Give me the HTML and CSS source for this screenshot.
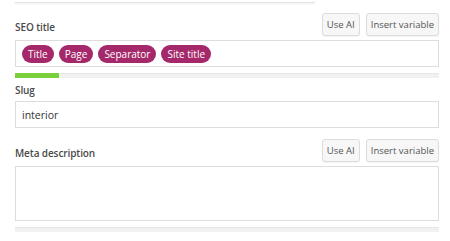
FILE: index.html
```html
<!DOCTYPE html>
<html lang="en">
  <head>
    <meta charset="UTF-8" />
    <meta name="viewport" content="width=device-width, initial-scale=1.0" />
    <title>Search appearance</title>
    <link rel="stylesheet" href="styles.css">
  </head>
  <body>
    <div class="editor">
      <div class="editor__prev"></div>

      <div class="field">
        <div class="field__head">
          <label class="field__label">SEO title</label>
          <div class="field__actions">
            <button class="action">Use AI</button>
            <button class="action">Insert variable</button>
          </div>
        </div>
        <div class="field__input field__input--tags">
          <span class="tag">Title</span>
          <span class="tag">Page</span>
          <span class="tag">Separator</span>
          <span class="tag">Site title</span>
        </div>
        <div class="meter"><span class="meter__fill" style="width: 44px"></span></div>
      </div>

      <div class="field field--slug">
        <label class="field__label">Slug</label>
        <div class="field__input">interior</div>
      </div>

      <div class="field field--meta">
        <div class="field__head">
          <label class="field__label">Meta description</label>
          <div class="field__actions">
            <button class="action">Use AI</button>
            <button class="action">Insert variable</button>
          </div>
        </div>
        <div class="field__input field__input--area"></div>
        <div class="meter"></div>
      </div>
    </div>
  </body>
</html>
```
FILE: styles.css
```css
* {
  margin: 0;
  padding: 0;
  box-sizing: border-box;
}
body {
  background-color: #fff;
  font-family: "Open Sans", "Noto Sans", sans-serif;
  color: #333;
}
.editor {
  width: 439px;
  padding-left: 15px;
}
.editor__prev {
  width: 300px;
  height: 3px;
  border-bottom: 1px solid #e4e4e4;
  box-shadow: 0 1px 2px rgba(0, 0, 0, 0.06);
}
.field {
  display: flex;
  flex-direction: column;
}
.field__head {
  display: flex;
  justify-content: space-between;
  align-items: center;
  margin-top: 10px;
  height: 23px;
}
.field__label {
  font-size: 10px;
  font-weight: 600;
  letter-spacing: -0.1px;
  color: #4a4a4a;
  padding-top: 5px;
}
.field__actions {
  display: flex;
  gap: 6px;
}
.action {
  font-family: inherit;
  font-size: 9.5px;
  color: #555;
  height: 23px;
  padding: 0 4px;
  background-color: #f7f7f7;
  border: 1px solid #dcdcdc;
  border-radius: 3px;
  box-shadow: 0 1px 0 rgba(0, 0, 0, 0.04);
}
.field__input {
  margin-top: 4px;
  height: 27px;
  border: 1px solid #ddd;
  display: flex;
  align-items: center;
  padding: 0 6px;
  font-size: 10.5px;
  color: #333;
}
.field__input--tags {
  gap: 5px;
}
.field__input--area {
  height: 55px;
}
.tag {
  background-color: #a4286a;
  color: #fff;
  font-size: 10px;
  line-height: 18px;
  padding: 0 6px;
  border-radius: 9px;
}
.meter {
  margin-top: 6px;
  height: 5px;
  background-color: #f1f1f1;
  border-top: 1px solid #e6e6e6;
  display: flex;
}
.meter__fill {
  background-color: #7ad03a;
  margin-top: -1px;
}
.field--slug .field__label {
  padding-top: 3px;
  line-height: 18px;
}
.field--slug .field__input {
  margin-top: 2px;
}
.field--meta .field__head {
  margin-top: 11px;
}
.field--meta .meter {
  margin-top: 6px;
}
```
